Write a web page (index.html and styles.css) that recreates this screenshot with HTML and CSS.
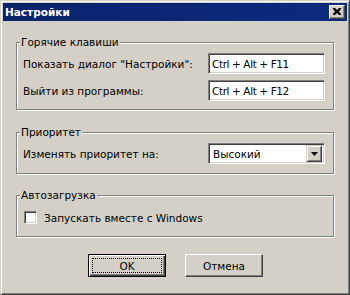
FILE: index.html
```html
<!DOCTYPE html>
<html lang="ru">
<head>
<meta charset="utf-8">
<title>Настройки</title>
<link rel="stylesheet" href="styles.css">
</head>
<body>
<div class="window">
  <div class="titlebar">
    <span class="title">Настройки</span>
    <span class="close">
      <svg width="8" height="7" viewBox="0 0 8 7"><path d="M0 0h2l2 2 2-2h2v1L6 3.5 8 6v1H6L4 5 2 7H0V6l2-2.5L0 1z" fill="#000"/></svg>
    </span>
  </div>
  <div class="content">
    <div class="group g1">
      <span class="legend">Горячие клавиши</span>
      <div class="row">
        <span class="label">Показать диалог "Настройки":</span>
        <span class="field">Ctrl + Alt + F11</span>
      </div>
      <div class="row">
        <span class="label">Выйти из программы:</span>
        <span class="field">Ctrl + Alt + F12</span>
      </div>
    </div>
    <div class="group g2">
      <span class="legend">Приоритет</span>
      <div class="row">
        <span class="label">Изменять приоритет на:</span>
        <span class="field select">
          <span class="value">Высокий</span>
          <span class="arrow"><svg width="7" height="4" viewBox="0 0 7 4"><path d="M0 0h7L3.5 4z" fill="#000"/></svg></span>
        </span>
      </div>
    </div>
    <div class="group g3">
      <span class="legend">Автозагрузка</span>
      <div class="check-row">
        <span class="checkbox"></span>
        <span class="label">Запускать вместе с Windows</span>
      </div>
    </div>
    <div class="buttons">
      <span class="btn default"><span class="focus">OK</span></span>
      <span class="btn">Отмена</span>
    </div>
  </div>
</div>
</body>
</html>
```

FILE: styles.css
```css
html, body {
  margin: 0;
  padding: 0;
  background: #d4d0c8;
}
body {
  font-family: "DejaVu Sans", "Liberation Sans", sans-serif;
  font-size: 10.5px;
  color: #000;
}
.window {
  width: 350px;
  height: 295px;
  box-sizing: border-box;
  border: 1px solid;
  border-color: #d4d0c8 #404040 #404040 #d4d0c8;
  box-shadow: inset 1px 1px 0 #fff, inset -1px -1px 0 #808080;
  padding: 2px;
  background: #d4d0c8;
}
.titlebar {
  height: 18px;
  background: linear-gradient(90deg, #0a246a 0%, #0c2a80 100%);
  display: flex;
  align-items: center;
  justify-content: space-between;
  padding: 0 2px 0 2px;
}
.title {
  color: #fff;
  font-weight: bold;
  font-size: 10.5px;
}
.close {
  width: 16px;
  height: 14px;
  box-sizing: border-box;
  background: #d4d0c8;
  border: 1px solid;
  border-color: #fff #404040 #404040 #fff;
  box-shadow: inset -1px -1px 0 #808080;
  display: flex;
  align-items: center;
  justify-content: center;
  padding-bottom: 1px;
}
.content {
  padding: 21px 13px 0 13px;
  display: flex;
  flex-direction: column;
}
.group {
  position: relative;
  border: 1px solid #808080;
  box-shadow: inset 1px 1px 0 #fff, 1px 1px 0 #fff;
  display: flex;
  flex-direction: column;
}
.g1 {
  padding: 10px 8px 8px 6px;
  gap: 6px;
}
.g2 {
  margin-top: 22px;
  padding: 10px 8px 9px 6px;
}
.g3 {
  margin-top: 21px;
  padding: 15px 8px 12px 7px;
}
.legend {
  position: absolute;
  top: -7px;
  left: 3px;
  padding: 0 1px 0 1px;
  background: #d4d0c8;
  line-height: 13px;
}
.row {
  display: flex;
  align-items: center;
  height: 21px;
}
.row .label {
  width: 185px;
}
.field {
  width: 117px;
  height: 21px;
  box-sizing: border-box;
  background: #fff;
  border: 1px solid;
  border-color: #808080 #fff #fff #808080;
  box-shadow: inset 1px 1px 0 #404040, inset -1px -1px 0 #d4d0c8;
  padding: 0 0 0 3px;
  display: flex;
  align-items: center;
  letter-spacing: -0.4px;
}
.select {
  padding: 2px 2px 2px 4px;
  justify-content: space-between;
  letter-spacing: 0;
}
.arrow {
  width: 16px;
  height: 17px;
  box-sizing: border-box;
  background: #d4d0c8;
  border: 1px solid;
  border-color: #d4d0c8 #404040 #404040 #d4d0c8;
  box-shadow: inset 1px 1px 0 #fff, inset -1px -1px 0 #808080;
  display: flex;
  align-items: center;
  justify-content: center;
}
.check-row {
  display: flex;
  align-items: center;
  height: 13px;
  gap: 7px;
}
.checkbox {
  width: 13px;
  height: 13px;
  box-sizing: border-box;
  background: #fff;
  border: 1px solid;
  border-color: #808080 #fff #fff #808080;
  box-shadow: inset 1px 1px 0 #404040, inset -1px -1px 0 #d4d0c8;
}
.buttons {
  margin-top: 17px;
  display: flex;
  justify-content: center;
  gap: 19px;
  padding-left: 1px;
}
.btn {
  width: 78px;
  height: 23px;
  box-sizing: border-box;
  border: 1px solid;
  border-color: #fff #404040 #404040 #fff;
  box-shadow: inset -1px -1px 0 #808080;
  display: flex;
  align-items: center;
  justify-content: center;
  background: #d4d0c8;
}
.btn.default {
  border: 1px solid #000;
  box-shadow: inset 1px 1px 0 #fff, inset -1px -1px 0 #404040, inset -2px -2px 0 #808080;
  padding: 3px;
}
.focus {
  flex: 1;
  align-self: stretch;
  border: 1px dotted #000;
  display: flex;
  align-items: center;
  justify-content: center;
}
```
